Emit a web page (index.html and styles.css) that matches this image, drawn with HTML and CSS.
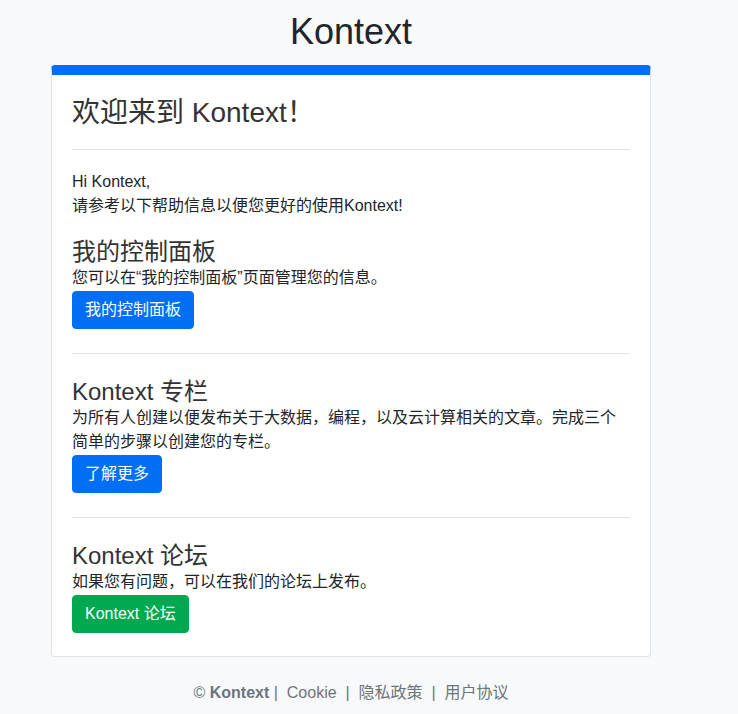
FILE: index.html
```html
<!DOCTYPE html>
<html lang="zh-CN">
<head>
<meta charset="utf-8">
<title>Kontext</title>
<link rel="stylesheet" href="styles.css">
</head>
<body>
<div class="page">
  <div class="container">
    <h1 class="brand">Kontext</h1>
    <div class="card">
      <div class="card-body">
        <h3 class="welcome">欢迎来到 Kontext！</h3>
        <hr class="rule rule-first">
        <p class="intro">Hi Kontext,<br>请参考以下帮助信息以便您更好的使用Kontext!</p>

        <h4 class="sec-title sec-title-first">我的控制面板</h4>
        <p class="sec-text">您可以在“我的控制面板”页面管理您的信息。</p>
        <div class="btn-row"><a class="btn btn-blue">我的控制面板</a></div>

        <hr class="rule">

        <h4 class="sec-title">Kontext 专栏</h4>
        <p class="sec-text">为所有人创建以便发布关于大数据，编程，以及云计算相关的文章。完成三个简单的步骤以创建您的专栏。</p>
        <div class="btn-row"><a class="btn btn-blue">了解更多</a></div>

        <hr class="rule">

        <h4 class="sec-title">Kontext 论坛</h4>
        <p class="sec-text">如果您有问题，可以在我们的论坛上发布。</p>
        <div class="btn-row"><a class="btn btn-green">Kontext 论坛</a></div>
      </div>
    </div>
    <div class="footer">© <b>Kontext</b> |&nbsp; <a>Cookie</a> &nbsp;|&nbsp; <a>隐私政策</a> &nbsp;|&nbsp; <a>用户协议</a></div>
  </div>
</div>
</body>
</html>
```

FILE: styles.css
```css
html, body {
  margin: 0;
  padding: 0;
  background: #f8f9fa;
}

body {
  font-family: "Liberation Sans", Arial, "Noto Sans CJK SC", sans-serif;
  font-size: 16px;
  line-height: 24px;
  color: #212529;
}

.page {
  width: 702px;
}

.container {
  width: 600px;
  margin: 0 auto;
}

.brand {
  margin: 10px 0 12px;
  font-size: 36px;
  line-height: 43px;
  font-weight: 400;
  text-align: center;
  color: #212529;
}

.card {
  background: #fff;
  border: 1px solid #dfe3e8;
  border-top: 10px solid #006ff6;
  border-radius: 4px;
}

.card-body {
  padding: 21px 20px 23px;
}

.welcome {
  margin: 0;
  font-size: 28px;
  line-height: 34px;
  font-weight: 400;
  color: #333;
}

.rule {
  border: 0;
  border-top: 1px solid #dfe2e6;
  margin: 24px 0 23px;
  height: 0;
}

.rule-first {
  margin: 19px 0 20px;
}

.intro {
  margin: 0 0 19px;
}

.sec-title {
  margin: 0;
  font-size: 24px;
  line-height: 29px;
  font-weight: 400;
  color: #333;
}

.sec-text {
  margin: 0 0 1px;
}

.btn-row {
  display: flex;
}

.btn {
  display: block;
  padding: 6px 12px;
  border: 1px solid transparent;
  border-radius: 4px;
  color: #fff;
  font-size: 16px;
  line-height: 24px;
  text-decoration: none;
}

.btn-blue {
  background: #006ff6;
  border-color: #006ff6;
}

.btn-green {
  background: #00a94f;
  border-color: #00a94f;
}

.footer {
  margin: 24px 0 10px;
  text-align: center;
  color: #6c757d;
  font-size: 16px;
  line-height: 24px;
}

.footer b {
  font-weight: 700;
}

.footer a {
  color: #6c757d;
  text-decoration: none;
}
```
